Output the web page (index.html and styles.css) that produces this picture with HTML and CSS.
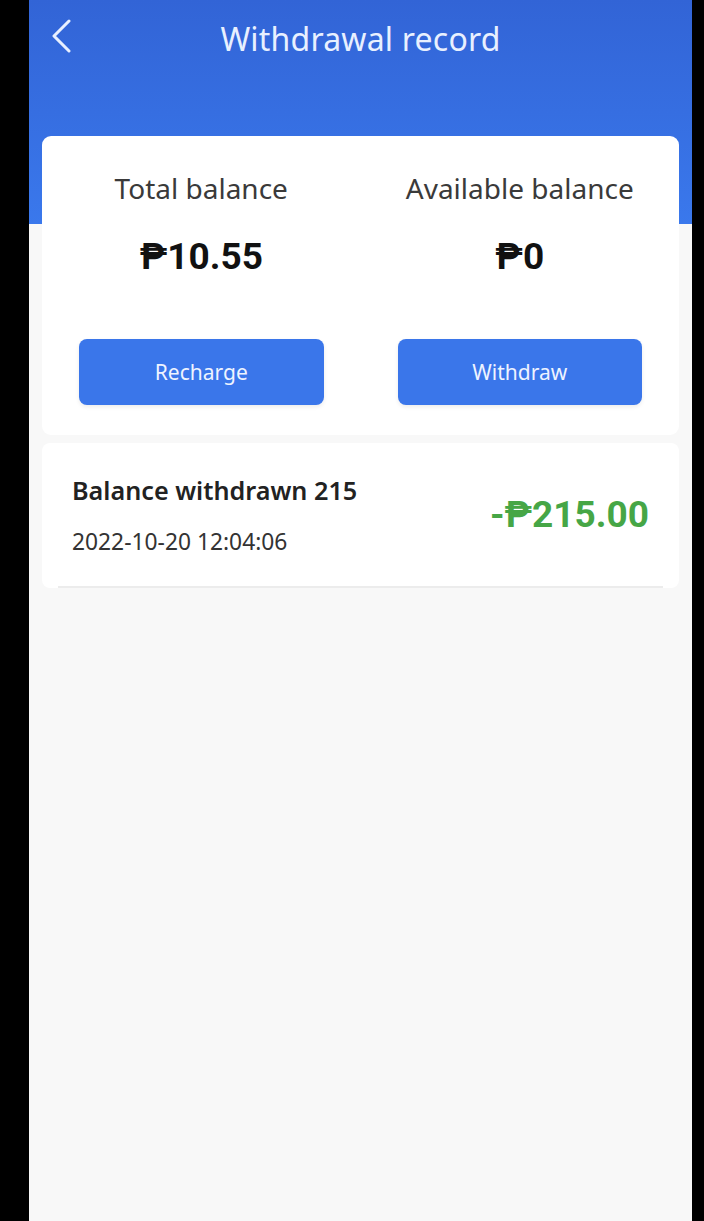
FILE: index.html
```html
<!DOCTYPE html>
<html lang="en">

<head>
    <meta charset="UTF-8">
    <meta name="viewport" content="width=device-width, initial-scale=1.0">
    <title>Withdrawal record</title>
    <link rel="stylesheet" href="styles.css">
</head>

<body>
    <div class="phone">
        <div class="top-bar">
            <div class="nav">
                <a class="back" href="#">
                    <svg width="22" height="34" viewBox="0 0 22 34">
                        <path d="M19 2 L4 17 L19 32" fill="none" stroke="#e8f0ff" stroke-width="3" stroke-linecap="round" stroke-linejoin="round"/>
                    </svg>
                </a>
                <h1>Withdrawal record</h1>
            </div>
        </div>

        <div class="content">
            <div class="balance-card">
                <div class="balance-col">
                    <div class="label">Total balance</div>
                    <div class="amount">₱10.55</div>
                    <button class="action-btn">Recharge</button>
                </div>
                <div class="balance-col">
                    <div class="label">Available balance</div>
                    <div class="amount">₱0</div>
                    <button class="action-btn">Withdraw</button>
                </div>
            </div>

            <div class="record">
                <div class="record-row">
                    <div class="record-info">
                        <div class="record-title">Balance withdrawn 215</div>
                        <div class="record-date">2022-10-20 12:04:06</div>
                    </div>
                    <div class="record-amount">-₱215.00</div>
                </div>
            </div>
        </div>
    </div>
</body>
</html>
```

FILE: styles.css
```css
body {
    margin: 0;
    background-color: #000;
    font-family: 'Noto Sans', 'Roboto', sans-serif;
}

.phone {
    margin-left: 29px;
    width: 663px;
    min-height: 1221px;
    background-color: #f8f8f8;
    overflow: hidden;
}

.top-bar {
    height: 224px;
    background: linear-gradient(180deg, #3264d6 0%, #3a78ec 100%);
}

.nav {
    position: relative;
    height: 76px;
    display: flex;
    align-items: center;
    justify-content: center;
}

.back {
    position: absolute;
    left: 21px;
    top: 19px;
}

.nav h1 {
    margin: 0;
    color: #e8f0ff;
    font-size: 32px;
    font-weight: 400;
    letter-spacing: 0.2px;
}

.content {
    margin-top: -88px;
    padding: 0 13px;
}

.balance-card {
    display: flex;
    background: #fff;
    border-radius: 9px;
    padding: 30px 0 30px;
}

.balance-col {
    flex: 1;
    display: flex;
    flex-direction: column;
    align-items: center;
    padding: 0 37px;
}

.label {
    color: #3a3a3a;
    font-size: 28px;
    line-height: 44px;
}

.amount {
    margin-top: 27px;
    color: #111;
    font-family: 'Roboto', sans-serif;
    font-weight: 700;
    font-size: 37px;
    line-height: 40px;
}

.action-btn {
    margin-top: 62px;
    width: 100%;
    height: 66px;
    border: none;
    border-radius: 8px;
    background: #3a76ea;
    color: #eef3ff;
    font-family: 'Noto Sans', sans-serif;
    font-size: 21px;
    box-shadow: 0 2px 4px rgba(0, 0, 0, 0.08);
}

.record {
    margin-top: 8px;
    background: #fff;
    border-radius: 8px;
    padding: 0 16px;
}

.record-row {
    display: flex;
    align-items: center;
    justify-content: space-between;
    height: 143px;
    padding: 0 14px;
    border-bottom: 2px solid #ececec;
}

.record-title {
    color: #222;
    font-size: 25.2px;
    font-weight: 600;
}

.record-date {
    margin-top: 19px;
    color: #333;
    font-size: 22.8px;
}

.record-amount {
    color: #46a646;
    font-family: 'Roboto', sans-serif;
    font-weight: 700;
    font-size: 37px;
}
```
